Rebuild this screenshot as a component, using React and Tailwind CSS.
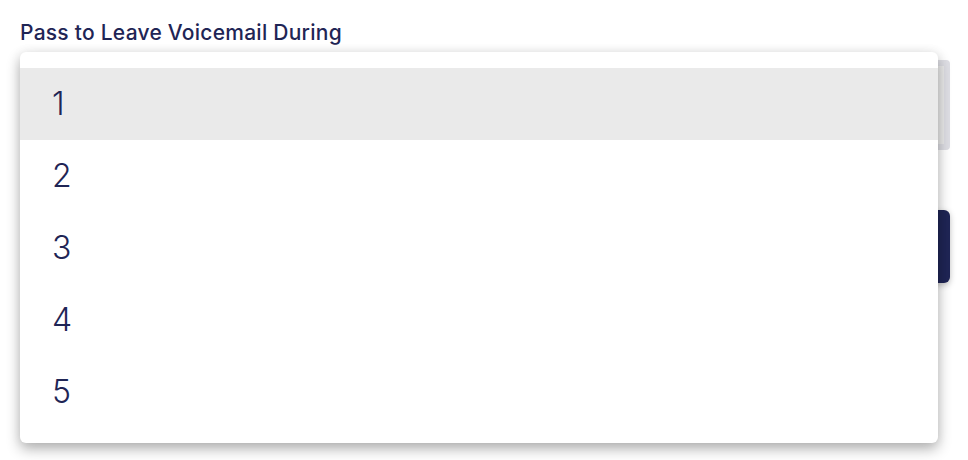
import React from "react";

export default function App() {
  const items = ["1", "2", "3", "4", "5"];
  return (
    <div className="w-[968px] h-[460px] bg-white overflow-hidden relative" style={{ fontFamily: "Inter, 'Noto Sans', sans-serif" }}>
      <div className="pl-5 pr-[18px] pt-[19px]">
        <div className="text-[21px] leading-[28px] font-medium text-[#1f2555] tracking-[0.25px]">Pass to Leave Voicemail During</div>
        <div className="relative mt-[5px]">
          {/* content behind the menu */}
          <div className="pt-[8px]">
            <div className="h-[90px] rounded-[4px] border-[6px] border-[#dedee4] bg-[#ebebeb]" />
            <div className="flex justify-end mt-[60px]">
              <div className="w-[200px] h-[73px] rounded-[6px] bg-[#1f2555] shadow-[0_2px_6px_rgba(0,0,0,0.25)]" />
            </div>
          </div>
          {/* dropdown menu */}
          <div className="absolute left-0 top-0 w-[918px] h-[391px] bg-white rounded-[6px] shadow-[0_6px_14px_rgba(0,0,0,0.3),0_0_12px_rgba(0,0,0,0.06)] py-4">
            {items.map((it, i) => (
              <div
                key={it}
                className={`h-[72px] flex items-center pl-[32px] text-[32px] font-light text-[#1f2555] ${i === 0 ? "bg-[#eaeaea]" : ""}`}
              >
                {it}
              </div>
            ))}
          </div>
        </div>
      </div>
    </div>
  );
}
